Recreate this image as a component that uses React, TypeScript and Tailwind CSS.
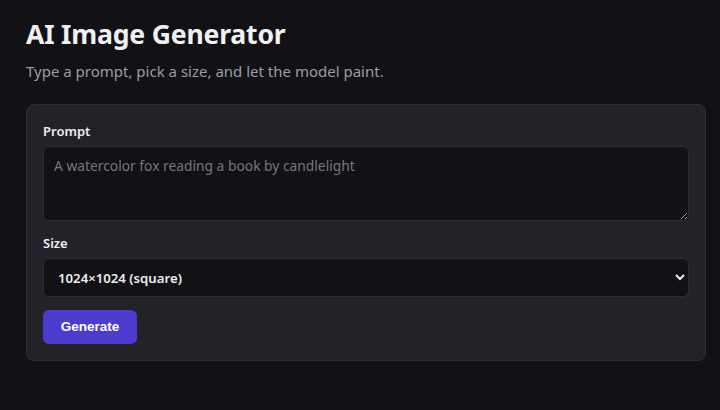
import { useState } from "react";

const sizes = ["1024×1024 (square)", "1792×1024 (landscape)", "1024×1792 (portrait)"];

export default function App() {
    const [prompt, setPrompt] = useState("");
    const [size, setSize] = useState(sizes[0]);

    return (
        <div className="min-h-[410px] w-[720px] bg-[#111116] px-[26px] pt-[17px] text-[#ededf0]" style={{ fontFamily: '"Noto Sans", "Open Sans", sans-serif' }}>
            <h1 className="text-[26.6px] font-bold leading-[34px] tracking-[-0.2px] text-[#f0f0f3]">AI Image Generator</h1>
            <p className="mt-[10px] text-[15px] leading-[20px] text-[#9d9ca6]">Type a prompt, pick a size, and let the model paint.</p>

            <div className="mt-[23px] w-[680px] rounded-[8px] border border-[#2e2d34] bg-[#232228] px-[16px] pt-[17px] pb-[16px]">
                <label className="block text-[13px] font-semibold leading-[18px] text-[#eeeef2]">Prompt</label>
                <textarea
                    value={prompt}
                    onChange={(e) => setPrompt(e.target.value)}
                    placeholder="A watercolor fox reading a book by candlelight"
                    className="mt-[6px] block h-[75px] w-full rounded-[6px] border border-[#2e2d34] bg-[#111116] px-[10px] py-[9px] text-[13.8px] leading-[20px] text-[#ededf0] outline-none placeholder:text-[#77767f]"
                />

                <label className="mt-[13px] block text-[13px] font-semibold leading-[18px] text-[#eeeef2]">Size</label>
                <select
                    value={size}
                    onChange={(e) => setSize(e.target.value)}
                    className="mt-[6px] block h-[39px] w-full rounded-[6px] border border-[#2e2d34] bg-[#111116] px-[10px] text-[13.2px] font-semibold text-[#ededf0] outline-none"
                >
                    {sizes.map((s) => <option key={s}>{s}</option>)}
                </select>

                <button className="mt-[13px] h-[34px] w-[94px] rounded-[6px] bg-[#4c3bcf] text-[13.5px] font-bold text-white" style={{ fontFamily: '"Liberation Sans", Arial, sans-serif' }}>
                    Generate
                </button>
            </div>
        </div>
    );
}
